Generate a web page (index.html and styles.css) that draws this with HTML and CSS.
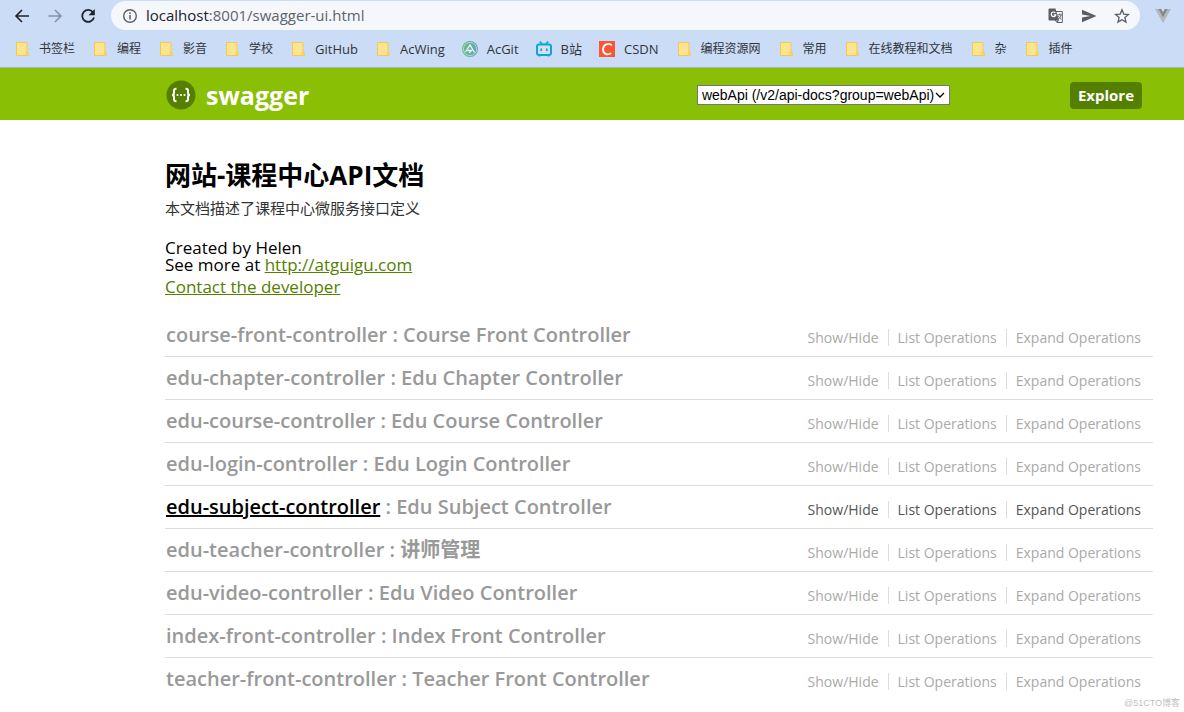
FILE: index.html
```html
<!DOCTYPE html>
<html lang="zh-CN">
<head>
<meta charset="utf-8">
<title>Swagger UI</title>
<link rel="stylesheet" href="styles.css">
</head>
<body>
<svg class="defs" aria-hidden="true">
  <symbol id="folder" viewBox="0 0 16 16"><path d="M2.500 1.500h10.500v10l1 1v2h-11.500z" fill="#ffe48f" stroke="#efca57"/><path d="M12 14.500v-2.500l1-1.500 1.500 2v2z" fill="#fbd55c" stroke="#efca57" stroke-width=".6"/></symbol>
</svg>
<div class="browser">
  <div class="toolbar">
    <nav class="nav-buttons">
      <button class="icon-btn" aria-label="Back"><svg viewBox="0 0 16 16"><path d="M15 8H2M8 2 2 8l6 6" fill="none" stroke="#1f2328" stroke-width="1.600"/></svg></button>
      <button class="icon-btn" aria-label="Forward"><svg viewBox="0 0 16 16"><path d="M1.500 8H14M8 2l6 6-6 6" fill="none" stroke="#8792a6" stroke-width="1.600"/></svg></button>
      <button class="icon-btn" aria-label="Reload"><svg viewBox="0 0 16 16"><path d="M13.200 4.500A6 6 0 1 0 14 9.500" fill="none" stroke="#1f2328" stroke-width="1.800"/><path d="M14.800 1v6.300H8.500z" fill="#1f2328"/></svg></button>
    </nav>
    <div class="omnibox">
      <svg class="info" viewBox="0 0 16 16"><circle cx="8" cy="8" r="6.300" fill="none" stroke="#5a5e63" stroke-width="1.400"/><path d="M8 7v4.500M8 4.300v1.600" stroke="#5a5e63" stroke-width="1.500"/></svg>
      <div class="url"><span class="host">localhost</span>:8001/swagger-ui.html</div>
      <button class="icon-btn" aria-label="Translate"><svg viewBox="0 0 16 16"><path d="M7 3.500h7.300v11H9L7 12z" fill="#f4f8fd" stroke="#5a5e63"/><path d="M1.500.5h6l3.500 12H1.500a1 1 0 0 1-1-1v-10a1 1 0 0 1 1-1z" fill="#5a5e63"/><path d="M7.300 4.800A2.300 2.300 0 1 0 7.800 6.800H5.700" fill="none" stroke="#fff" stroke-width="1.200"/><path d="M8.500 12.500 9 15l2-2.500z" fill="#5a5e63"/><path d="M9.300 6.800H14M11.700 5.600v1.200M13 7c-.4 2-1.500 3.300-3 4.300M10.300 8c.7 1.500 1.600 2.500 3 3.300" fill="none" stroke="#5a5e63" stroke-width=".9"/></svg></button>
      <button class="icon-btn" aria-label="Share"><svg viewBox="0 0 16 16"><path d="M1 1.800 15.500 8 1 14.200V9.400L9.500 8 1 6.600z" fill="#5a5e63"/></svg></button>
      <button class="icon-btn" aria-label="Bookmark"><svg viewBox="0 0 16 16"><path d="m8 1.800 1.800 4.300 4.700.4-3.600 3 1.100 4.600L8 11.700l-4 2.400 1.100-4.600-3.600-3 4.700-.4z" fill="none" stroke="#5a5e63" stroke-width="1.300"/></svg></button>
    </div>
    <button class="icon-btn" aria-label="Vue devtools"><svg viewBox="0 0 16 16"><path d="M0 1h3.200L8 9.500 12.800 1H16L8 15z" fill="#b4b7bc"/><path d="M3.200 1h3L8 4.200 9.800 1h3L8 9.500z" fill="#85878b"/></svg></button>
  </div>
  <nav class="bookmarks">
    <a href="#"><svg><use href="#folder"/></svg>书签栏</a>
    <a href="#"><svg><use href="#folder"/></svg>编程</a>
    <a href="#"><svg><use href="#folder"/></svg>影音</a>
    <a href="#"><svg><use href="#folder"/></svg>学校</a>
    <a href="#" class="latin"><svg><use href="#folder"/></svg>GitHub</a>
    <a href="#" class="latin"><svg><use href="#folder"/></svg>AcWing</a>
    <a href="#" class="latin"><svg viewBox="0 0 16 16"><defs><linearGradient id="ac"><stop stop-color="#69c17d"/><stop offset="1" stop-color="#639fc4"/></linearGradient></defs><circle cx="8" cy="8" r="8" fill="url(#ac)"/><circle cx="8" cy="8" r="6.600" fill="none" stroke="#c3e2d6" stroke-width=".8"/><path d="M3.500 11 8 4l4.500 7.500M5.500 9.500h4L7 12" fill="none" stroke="#edf8f2" stroke-width="1.300"/></svg>AcGit</a>
    <a href="#" class="latin"><svg viewBox="0 0 16 16"><rect x="1" y="3.500" width="14" height="10.500" rx="2" fill="#cfe3f5" stroke="#12a3dc" stroke-width="2"/><path d="m3.800.6 2.700 2.900M12.200.6 9.500 3.500" stroke="#12a3dc" stroke-width="1.800"/><path d="M5.200 7.500v2.500M10.800 7.500v2.500M3.500 14.500v1M12.500 14.500v1" stroke="#12a3dc" stroke-width="1.700"/></svg>B站</a>
    <a href="#" class="latin"><svg viewBox="0 0 16 16"><path d="M0 0h16v16H0z" fill="#fc5531"/><path d="M12.800 4.200C9 1.600 4.500 3.300 4 8c-.3 5 4.300 6.500 8.300 4.300" fill="none" stroke="#fff" stroke-width="1.800"/></svg>CSDN</a>
    <a href="#"><svg><use href="#folder"/></svg>编程资源网</a>
    <a href="#"><svg><use href="#folder"/></svg>常用</a>
    <a href="#"><svg><use href="#folder"/></svg>在线教程和文档</a>
    <a href="#"><svg><use href="#folder"/></svg>杂</a>
    <a href="#"><svg><use href="#folder"/></svg>插件</a>
  </nav>
</div>

<header class="header">
  <a class="logo" href="#"><svg viewBox="0 0 30 30"><circle cx="15" cy="15" r="14.500" fill="#547f00"/><g fill="none" stroke="#fff" stroke-width="2"><path d="M10.500 8.800H10q-2 0-2 2v2.200q0 2-2 2 2 0 2 2v2.200q0 2 2 2h.5M19.500 8.800h.5q2 0 2 2v2.200q0 2 2 2-2 0-2 2v2.200q0 2-2 2h-.5"/></g><g fill="#fff"><circle cx="11.500" cy="15" r="1.100"/><circle cx="15" cy="15" r="1.100"/><circle cx="18.500" cy="15" r="1.100"/></g></svg>swagger</a>
  <form class="selector">
    <div class="select-box">
      <select aria-label="API group"><option>webApi (/v2/api-docs?group=webApi)</option></select>
      <svg viewBox="0 0 10 10" aria-hidden="true"><path d="m1 3 4 4 4-4" fill="none" stroke="#000" stroke-width="1.300"/></svg>
    </div>
    <button type="button" class="explore">Explore</button>
  </form>
</header>

<main class="main">
  <section class="info-block">
    <h1>网站-课程中心API文档</h1>
    <p class="description">本文档描述了课程中心微服务接口定义</p>
    <p class="meta">Created by Helen</p>
    <p class="meta">See more at <a href="#">http://atguigu.com</a></p>
    <p class="contact"><a href="#">Contact the developer</a></p>
  </section>
  <ul class="resources">
    <li><h2><a href="#">course-front-controller</a> : Course Front Controller</h2><div class="options"><a href="#">Show/Hide</a><a href="#">List Operations</a><a href="#">Expand Operations</a></div></li>
    <li><h2><a href="#">edu-chapter-controller</a> : Edu Chapter Controller</h2><div class="options"><a href="#">Show/Hide</a><a href="#">List Operations</a><a href="#">Expand Operations</a></div></li>
    <li><h2><a href="#">edu-course-controller</a> : Edu Course Controller</h2><div class="options"><a href="#">Show/Hide</a><a href="#">List Operations</a><a href="#">Expand Operations</a></div></li>
    <li><h2><a href="#">edu-login-controller</a> : Edu Login Controller</h2><div class="options"><a href="#">Show/Hide</a><a href="#">List Operations</a><a href="#">Expand Operations</a></div></li>
    <li class="active"><h2><a href="#">edu-subject-controller</a> : Edu Subject Controller</h2><div class="options"><a href="#">Show/Hide</a><a href="#">List Operations</a><a href="#">Expand Operations</a></div></li>
    <li><h2><a href="#">edu-teacher-controller</a> : 讲师管理</h2><div class="options"><a href="#">Show/Hide</a><a href="#">List Operations</a><a href="#">Expand Operations</a></div></li>
    <li><h2><a href="#">edu-video-controller</a> : Edu Video Controller</h2><div class="options"><a href="#">Show/Hide</a><a href="#">List Operations</a><a href="#">Expand Operations</a></div></li>
    <li><h2><a href="#">index-front-controller</a> : Index Front Controller</h2><div class="options"><a href="#">Show/Hide</a><a href="#">List Operations</a><a href="#">Expand Operations</a></div></li>
    <li><h2><a href="#">teacher-front-controller</a> : Teacher Front Controller</h2><div class="options"><a href="#">Show/Hide</a><a href="#">List Operations</a><a href="#">Expand Operations</a></div></li>
  </ul>
</main>
<div class="watermark">@51CTO博客</div>
</body>
</html>
```
FILE: styles.css
```css
* { box-sizing: border-box; }
body {
  margin: 0;
  background: #fff;
  color: #000;
  font-family: "Open Sans", "Noto Sans CJK SC", sans-serif;
}
h1, h2, p, ul { margin: 0; padding: 0; }
button { border: 0; padding: 0; font: inherit; cursor: pointer; }
.defs { position: absolute; width: 0; height: 0; }

/* Browser chrome */
.browser { background: #cbdcf6; border-bottom: 1px solid #a5b7bd; }
.toolbar { display: flex; align-items: center; padding: 1px 13px 0 14px; }
.nav-buttons { display: flex; gap: 17px; margin-right: 15px; }
.icon-btn { width: 16px; height: 16px; background: none; }
.icon-btn svg, .info { display: block; width: 16px; height: 16px; }
.omnibox {
  flex: 1;
  display: flex;
  align-items: center;
  gap: 17px;
  height: 29px;
  margin-right: 15px;
  padding: 0 10px 0 11px;
  border-radius: 15px;
  background: #f4f8fd;
}
.url { flex: 1; margin-left: -9px; padding-bottom: 2px; font-size: 15px; line-height: 20px; color: #5f6368; }
.host { color: #202124; }
.bookmarks { display: flex; align-items: center; gap: 17px; height: 37px; padding: 0 14px; }
.bookmarks a {
  display: flex;
  align-items: center;
  gap: 9px;
  color: #30343a;
  font-size: 12px;
  line-height: 20px;
  white-space: nowrap;
  text-decoration: none;
}
.bookmarks .latin { font-size: 13px; }
.bookmarks svg { width: 16px; height: 16px; }

/* Swagger header */
.header {
  display: flex;
  align-items: center;
  justify-content: space-between;
  height: 52px;
  padding: 2px 42px 0 166px;
  background: #89bf04;
}
.logo {
  display: flex;
  align-items: center;
  gap: 10px;
  color: #fff;
  font-size: 25px;
  font-weight: 700;
  text-decoration: none;
}
.logo svg { width: 30px; height: 30px; }
.selector { display: flex; align-items: center; gap: 120px; }
.select-box { position: relative; display: flex; align-items: center; }
.select-box svg { position: absolute; right: 5px; width: 10px; height: 10px; pointer-events: none; }
.select-box select {
  width: 253px;
  height: 20px;
  padding: 0 4px;
  border: 1px solid #767676;
  border-radius: 0;
  appearance: none;
  background: #fff;
  color: #000;
  font: 14px "Liberation Sans", sans-serif;
}
.explore {
  padding: 0 8px;
  border-radius: 4px;
  background: #547f00;
  color: #fff;
  font-size: 15px;
  font-weight: 700;
  line-height: 27px;
}

/* Documentation */
.main { padding: 37px 31px 0 165px; }
.info-block { margin-bottom: 13px; }
h1 { font-size: 26px; line-height: 36px; }
.description { margin: 5px 0 21px; color: #333; font-size: 15px; line-height: 20px; }
.meta { font-size: 17px; line-height: 17px; }
.contact { font-size: 17px; line-height: 28px; }
.info-block a { color: #547f00; }
.resources { list-style: none; }
.resources li {
  display: flex;
  justify-content: space-between;
  align-items: center;
  border-bottom: 1px solid #ddd;
  color: #999;
}
.resources li:last-child { border-bottom: 0; }
h2 { padding-left: 1px; font-size: 20px; font-weight: 650; line-height: 42px; }
h2 a { color: inherit; text-decoration: none; }
.options { display: flex; padding: 5px 12px 0 0; font-size: 14px; line-height: 17px; }
.options a { padding: 0 9px; border-right: 1px solid #ddd; color: #aaa; text-decoration: none; }
.options a:last-child { padding-right: 0; border-right: 0; }
.active h2 a { color: #000; text-decoration: underline; }
.active .options a { color: #555; }
.watermark {
  position: absolute;
  right: 4px;
  bottom: 2px;
  color: #c0c0c0;
  font: 9px/14px "Liberation Sans", "Noto Sans CJK SC", sans-serif;
}
```
